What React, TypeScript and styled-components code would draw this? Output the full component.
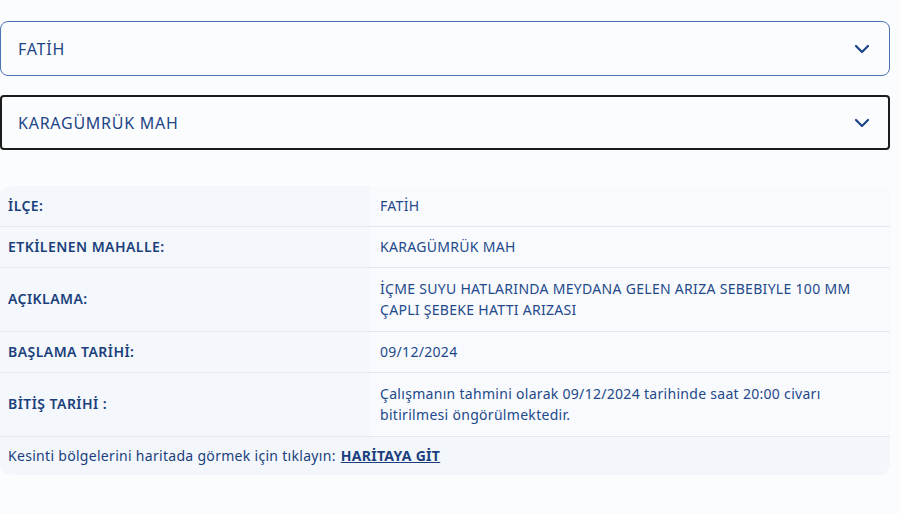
import React from 'react';
import styled, { createGlobalStyle } from 'styled-components';

const GlobalStyle = createGlobalStyle`
  body {
    margin: 0;
    background: #fbfcfe;
    font-family: "Noto Sans", "Open Sans", sans-serif;
    color: #1d4585;
  }
`;

const Page = styled.div`
  width: 890px;
  padding-top: 21px;
  display: flex;
  flex-direction: column;
`;

const Selects = styled.div`
  display: flex;
  flex-direction: column;
  gap: 19px;
`;

const SelectBox = styled.div<{ focused?: boolean }>`
  box-sizing: border-box;
  height: 55px;
  display: flex;
  align-items: center;
  justify-content: space-between;
  padding: ${(p) => (p.focused ? '0 18px 0 16px' : '0 19px 0 17px')};
  background: #fbfcfe;
  border: ${(p) => (p.focused ? '2px solid #1c1c1c' : '1px solid #4a72b5')};
  border-radius: ${(p) => (p.focused ? '4px' : '8px')};
  font-size: 16px;
  letter-spacing: 0.75px;
  color: #1d4585;
`;

const Chevron = () => (
  <svg width="16" height="10" viewBox="0 0 16 10" fill="none">
    <path d="M2 2l6 6 6-6" stroke="#1d4585" strokeWidth="2.2" strokeLinecap="round" strokeLinejoin="round" />
  </svg>
);

const Table = styled.div`
  margin-top: 36px;
  display: grid;
  grid-template-columns: 370px 1fr;
  border-radius: 10px;
  overflow: hidden;
  background: #f9fafd;
  font-size: 14px;
  letter-spacing: 0.3px;
`;

const Label = styled.div<{ tall?: boolean }>`
  box-sizing: border-box;
  min-height: ${(p) => (p.tall ? '64px' : '41px')};
  display: flex;
  align-items: center;
  padding: 0 8px 2px;
  background: #f4f7fb;
  border-bottom: 1px solid #e4e8ed;
  font-weight: 600;
  letter-spacing: 0.45px;
  color: #1a3f7c;
`;

const Value = styled.div<{ tall?: boolean }>`
  box-sizing: border-box;
  min-height: ${(p) => (p.tall ? '64px' : '41px')};
  display: flex;
  align-items: center;
  padding: 0 10px 2px;
  border-bottom: 1px solid #e4e8ed;
  line-height: 21px;
  color: #22498a;
`;

const ValueText = styled.span`
  max-width: 478px;
`;

const Footer = styled.div`
  grid-column: 1 / -1;
  height: 38px;
  display: flex;
  align-items: center;
  padding: 0 8px 2px;
  box-sizing: border-box;
  background: #f3f6fb;
  color: #1a3f7c;
`;

const MapLink = styled.a`
  margin-left: 5px;
  font-weight: 700;
  color: #1a3f7c;
  text-decoration: underline;
`;

const rows = [
  { label: 'İLÇE:', value: 'FATİH' },
  { label: 'ETKİLENEN MAHALLE:', value: 'KARAGÜMRÜK MAH' },
  {
    label: 'AÇIKLAMA:',
    value: 'İÇME SUYU HATLARINDA MEYDANA GELEN ARIZA SEBEBIYLE 100 MM ÇAPLI ŞEBEKE HATTI ARIZASI',
    tall: true,
  },
  { label: 'BAŞLAMA TARİHİ:', value: '09/12/2024' },
  {
    label: 'BİTİŞ TARİHİ :',
    value: 'Çalışmanın tahmini olarak 09/12/2024 tarihinde saat 20:00 civarı bitirilmesi öngörülmektedir.',
    tall: true,
  },
];

export default function App() {
  return (
    <>
      <GlobalStyle />
      <Page>
        <Selects>
          <SelectBox>
            FATİH
            <Chevron />
          </SelectBox>
          <SelectBox focused>
            KARAGÜMRÜK MAH
            <Chevron />
          </SelectBox>
        </Selects>
        <Table>
          {rows.map((r) => (
            <React.Fragment key={r.label}>
              <Label tall={r.tall}>{r.label}</Label>
              <Value tall={r.tall}>
                <ValueText>{r.value}</ValueText>
              </Value>
            </React.Fragment>
          ))}
          <Footer>
            Kesinti bölgelerini haritada görmek için tıklayın:
            <MapLink href="#">HARİTAYA GİT</MapLink>
          </Footer>
        </Table>
      </Page>
    </>
  );
}
